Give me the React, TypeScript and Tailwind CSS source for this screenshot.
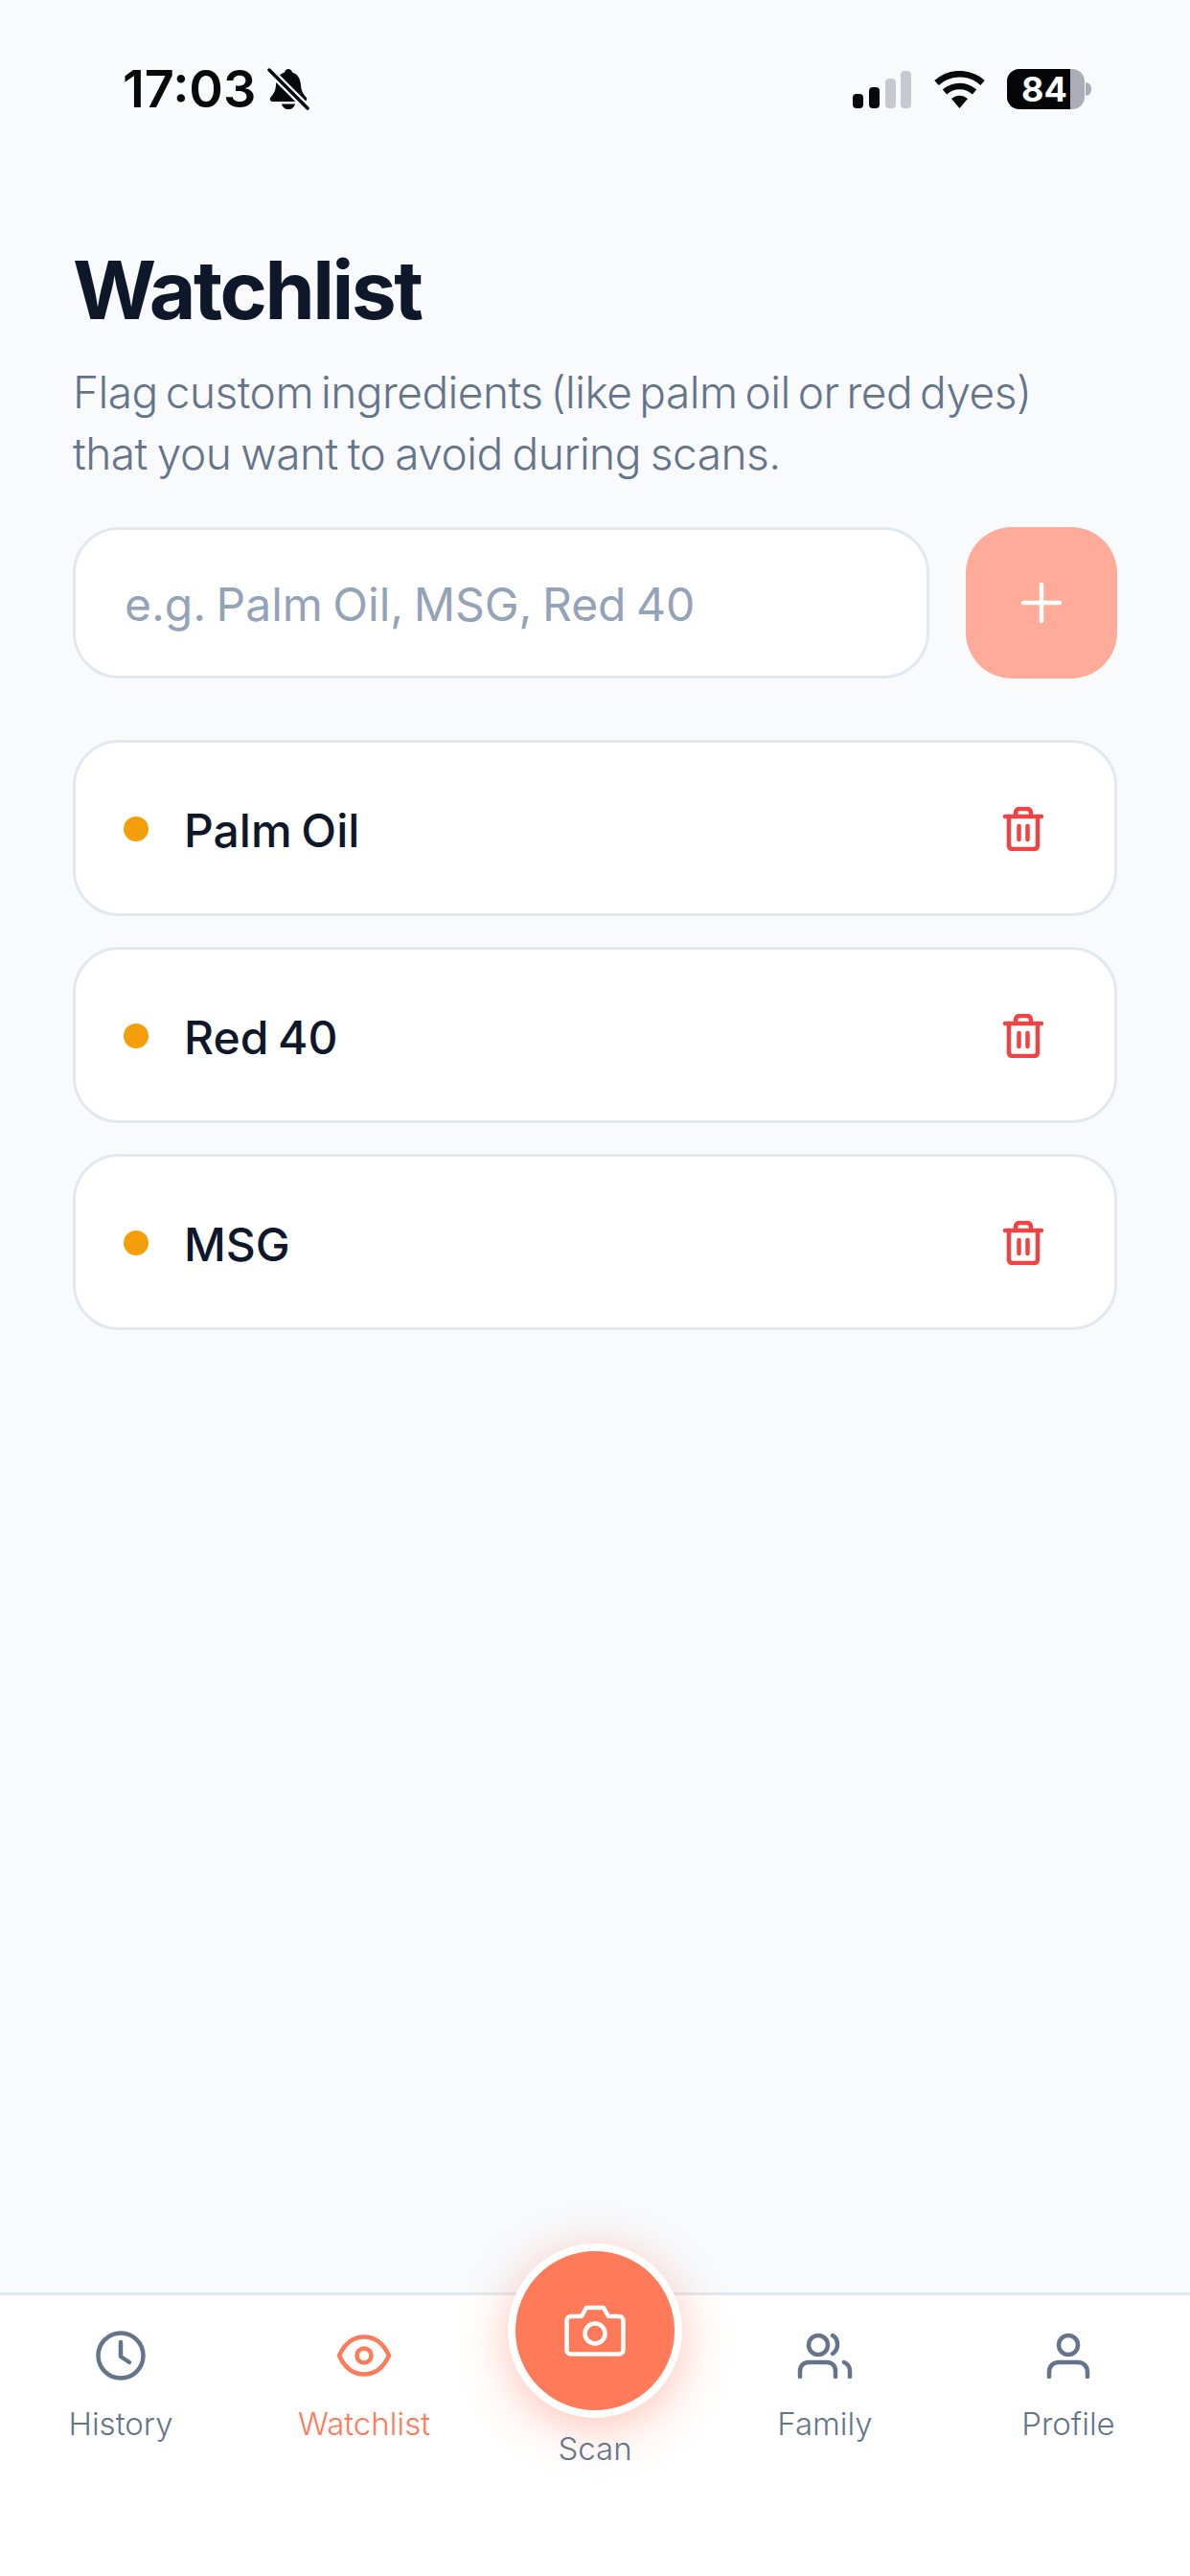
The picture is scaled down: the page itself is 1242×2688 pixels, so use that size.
import React from "react";

const font = { fontFamily: "Inter, 'Noto Sans', sans-serif" };

function Bell() {
  return (
    <svg width="44" height="46" viewBox="0 0 44 46" className="ml-[12px]">
      <path d="M22 2c-2 0-3.500 1.500-4 3.500C11.500 7.500 9.500 13 9 19c-.5 6-2.500 9-5.500 12.500-1.500 2-.5 4.500 2 4.500h33c2.500 0 3.500-2.500 2-4.500C37.500 28 35.500 25 35 19c-.5-6-2.500-11.500-9-13.500C25.500 3.500 24 2 22 2z" fill="#08090c" />
      <path d="M15 38.500h14c-.8 3.500-3.500 5.500-7 5.500s-6.200-2-7-5.500z" fill="#08090c" />
      <path d="M1 2 43 44" stroke="#f8fafc" strokeWidth="8" />
      <path d="M2 3 42 43" stroke="#08090c" strokeWidth="3.500" strokeLinecap="round" />
    </svg>
  );
}

function Signal() {
  return (
    <svg width="61" height="39" viewBox="0 0 61 39">
      <rect x="0" y="24" width="11" height="15" rx="4" fill="#08090c" />
      <rect x="17" y="17" width="11" height="22" rx="4" fill="#08090c" />
      <rect x="34" y="8" width="11" height="31" rx="4" fill="#c5c9d2" />
      <rect x="50" y="0" width="11" height="39" rx="4" fill="#c5c9d2" />
    </svg>
  );
}

function Wifi() {
  return (
    <svg width="53" height="39" viewBox="0 0 53 39" fill="none">
      <path d="M2.500 12.500C16 0 37 0 50.500 12.500" stroke="#08090c" strokeWidth="6.500" strokeLinecap="butt" />
      <path d="M11 22c9-8 22-8 31 0" stroke="#08090c" strokeWidth="6.500" />
      <path d="M18 29c5-4.500 12-4.500 17 0l-8.500 10z" fill="#08090c" />
    </svg>
  );
}

function Trash() {
  return (
    <svg width="42" height="46" viewBox="0 0 42 46" fill="none" stroke="#ef4444" strokeWidth="4.500" strokeLinecap="round" strokeLinejoin="round" className="mt-[2px]">
      <path d="M2 10h38" />
      <path d="M6 10v30c0 2.500 1.500 4 4 4h22c2.500 0 4-1.500 4-4V10" />
      <path d="M13 10V7c0-3 1.500-5 4.500-5h7c3 0 4.500 2 4.500 5v3" />
      <path d="M16.500 20v14" />
      <path d="M25.500 20v14" />
    </svg>
  );
}

function Clock() {
  return (
    <svg width="52" height="52" viewBox="0 0 52 52" fill="none" stroke="#64748b" strokeWidth="4.500" strokeLinecap="round" strokeLinejoin="round">
      <circle cx="26" cy="26" r="23.500" />
      <path d="M26 12v15l9 6" />
    </svg>
  );
}

function Eye() {
  return (
    <svg width="58" height="44" viewBox="0 0 58 44" fill="none" stroke="#ff7a59" strokeWidth="4.500" strokeLinecap="round" strokeLinejoin="round">
      <path d="M3 22C9 9 18 2.500 29 2.500S49 9 55 22c-6 13-15 19.500-26 19.500S9 35 3 22z" />
      <circle cx="29" cy="22" r="7.500" />
    </svg>
  );
}

function Camera() {
  return (
    <svg width="64" height="54" viewBox="0 0 64 54" fill="none" stroke="#ffffff" strokeWidth="4.500" strokeLinecap="round" strokeLinejoin="round">
      <path d="M7 12h11l5-9h18l5 9h11c2.500 0 4.500 2 4.500 4.500V47c0 2.500-2 4.500-4.500 4.500H7c-2.500 0-4.500-2-4.500-4.500V16.500C2.500 14 4.500 12 7 12z" />
      <circle cx="32" cy="30" r="10.500" />
    </svg>
  );
}

function Family() {
  return (
    <svg width="58" height="48" viewBox="0 0 58 48" fill="none" stroke="#64748b" strokeWidth="4.500" strokeLinecap="round" strokeLinejoin="round">
      <circle cx="22" cy="13" r="10" />
      <path d="M37 3c3.500 2 5 5.500 5 9.500S40 20 37 22" />
      <path d="M3 46v-6c0-5.500 4-9 9-9h19c5 0 9 3.500 9 9v6" />
      <path d="M49 31c3.500 1.500 6 5 6 9v6" />
    </svg>
  );
}

function Person() {
  return (
    <svg width="46" height="48" viewBox="0 0 46 48" fill="none" stroke="#64748b" strokeWidth="4.500" strokeLinecap="round" strokeLinejoin="round">
      <circle cx="23" cy="13" r="10" />
      <path d="M3 46v-5c0-5.500 4-10 10-10h20c6 0 10 4.500 10 10v5" />
    </svg>
  );
}

function NavItem({ icon, label, active }: { icon: React.ReactNode; label: string; active?: boolean }) {
  return (
    <div className="flex flex-col items-center">
      <div className="h-[60px] flex items-center justify-center">{icon}</div>
      <div className={`mt-[19px] text-[33px] leading-[44px] font-[350] ${active ? "text-[#ff7a59]" : "text-[#64748b]"}`}>{label}</div>
    </div>
  );
}

function Row({ name }: { name: string }) {
  return (
    <div className="h-[184px] bg-white border-[3px] border-[#e2e8f0] rounded-[48px] flex items-center pl-[50px] pr-[74px]">
      <div className="w-[26px] h-[26px] rounded-full bg-[#f59e0b] mt-[2px]" />
      <div className="ml-[37px] flex-1 text-[48px] leading-[60px] pt-[5px] font-medium text-[#0f172a] [word-spacing:-3px]">{name}</div>
      <Trash />
    </div>
  );
}

export default function App() {
  return (
    <div className="w-[1242px] h-[2688px] bg-[#f8fafc] flex flex-col overflow-hidden" style={font}>
      <div className="flex items-center h-[46px] mt-[70px] pl-[128px] pr-[103px]">
        <div className="text-[54px] leading-[46px] font-semibold text-[#08090c]">17:03</div>
        <Bell />
        <div className="flex-1" />
        <Signal />
        <div className="ml-[24px]"><Wifi /></div>
        <div className="ml-[23px] flex items-center">
          <div className="relative w-[81px] h-[42px] rounded-[13px] bg-[#a9adb8] overflow-hidden">
            <div className="w-[66px] h-[42px] bg-[#050507] flex items-center justify-center pl-[12px] text-[36px] leading-[42px] font-bold text-white">84</div>
          </div>
          <div className="w-[6px] h-[14px] bg-[#a9adb8] rounded-r-full ml-[1px]" />
        </div>
      </div>

      <div className="px-[76px] mt-[137px]">
        <h1 className="text-[84px] leading-[100px] font-bold text-[#0f172a] tracking-[-2.5px]">Watchlist</h1>
        <p className="mt-[24px] text-[46px] leading-[64px] font-[350] text-[#64748b] tracking-[-0.5px]">
          <span className="[word-spacing:-4.500px]">Flag custom ingredients (like palm oil or red dyes)</span>
          <br />
          <span className="[word-spacing:-2.500px]">that you want to avoid during scans.</span>
        </p>

        <div className="flex gap-[38px] mt-[45px]">
          <div className="flex-1 h-[158px] bg-white border-[3px] border-[#e2e8f0] rounded-[48px] flex items-center pl-[51px] pt-[3px] text-[48px] text-[#94a3b8] [word-spacing:-3px]">
            e.g. Palm Oil, MSG, Red 40
          </div>
          <div className="w-[158px] h-[158px] rounded-[48px] bg-[#ffab99] flex items-center justify-center">
            <svg width="42" height="42" viewBox="0 0 42 42" stroke="#ffffff" strokeWidth="4.500" strokeLinecap="round">
              <path d="M21 2v38M2 21h38" />
            </svg>
          </div>
        </div>

        <div className="flex flex-col gap-[32px] mt-[64px]">
          <Row name="Palm Oil" />
          <Row name="Red 40" />
          <Row name="MSG" />
        </div>
      </div>

      <div className="mt-auto h-[296px] bg-white border-t-[3px] border-[#e2e8f0] grid grid-cols-[252px_256px_226px_254px_254px] pt-[33px]">
        <NavItem icon={<Clock />} label="History" />
        <NavItem icon={<Eye />} label="Watchlist" active />
        <div className="flex flex-col items-center -mt-[87px]">
          <div className="w-[182px] h-[182px] shrink-0 rounded-full bg-[#ff7a59] border-[8px] border-white flex items-center justify-center shadow-[0_10px_50px_rgba(255,122,89,0.45)]">
            <Camera />
          </div>
          <div className="mt-[10px] text-[33px] leading-[44px] font-[350] text-[#64748b]">Scan</div>
        </div>
        <NavItem icon={<Family />} label="Family" />
        <NavItem icon={<Person />} label="Profile" />
      </div>
    </div>
  );
}
